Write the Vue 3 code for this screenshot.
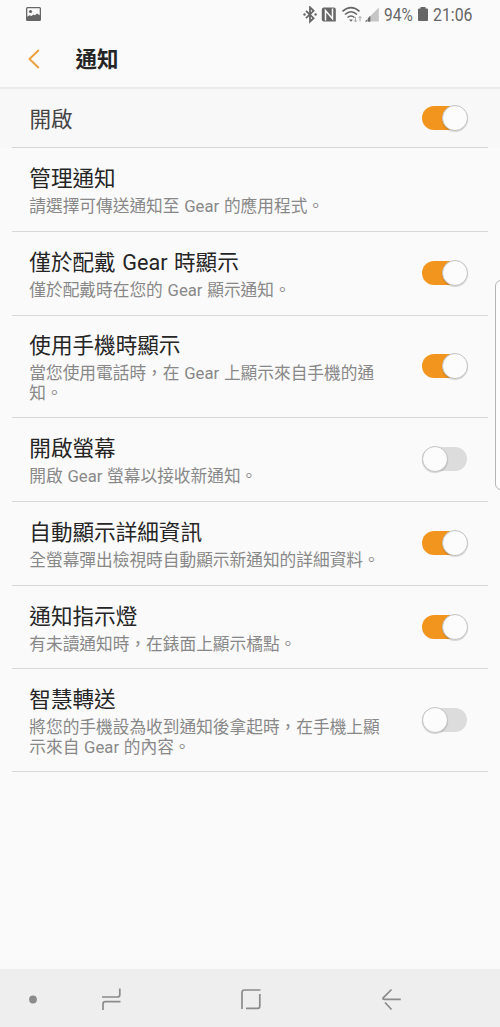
<script setup>
import { ref } from 'vue'

const rows = ref([
  { title: '管理通知', lines: ['請選擇可傳送通知至 Gear 的應用程式。'], on: null, h: 84 },
  { title: '僅於配戴 Gear 時顯示', lines: ['僅於配戴時在您的 Gear 顯示通知。'], on: true, h: 84 },
  { title: '使用手機時顯示', lines: ['當您使用電話時，在 Gear 上顯示來自手機的通', '知。'], on: true, h: 102 },
  { title: '開啟螢幕', lines: ['開啟 Gear 螢幕以接收新通知。'], on: false, h: 84 },
  { title: '自動顯示詳細資訊', lines: ['全螢幕彈出檢視時自動顯示新通知的詳細資料。'], on: true, h: 84 },
  { title: '通知指示燈', lines: ['有未讀通知時，在錶面上顯示橘點。'], on: true, h: 83, low: true },
  { title: '智慧轉送', lines: ['將您的手機設為收到通知後拿起時，在手機上顯', '示來自 Gear 的內容。'], on: false, h: 103, low: true }
])
const master = ref(true)
</script>

<template>
  <div class="screen">
    <header class="status">
      <svg class="picture" width="15" height="15" viewBox="0 0 15 15">
        <path fill="#666" fill-rule="evenodd" d="M1.500 0h12A1.500 1.500 0 0 1 15 1.500v11a1.500 1.500 0 0 1-1.500 1.500h-12A1.500 1.500 0 0 1 0 12.500v-11A1.500 1.500 0 0 1 1.500 0ZM1.300 1.300v8.400L3.500 8.200l2 .8L7.500 7.500l1.500.7L11 6.500l2.700 1.700V1.300Z" />
        <circle cx="4.500" cy="4.500" r="1.600" fill="#666" />
      </svg>
      <div class="indicators">
        <svg width="76" height="18" viewBox="0 0 76 18">
          <g fill="none" stroke="#666" stroke-width="1.800">
            <path d="M3 4.800l7.600 7.400L7 15.700V1.300l3.600 3.500L3 12.200" />
          </g>
          <circle cx="1.500" cy="8.500" r="1.200" fill="#666" />
          <circle cx="12.600" cy="8.500" r="1.200" fill="#666" />
          <path fill="#666" d="M20.500 1.500h10.300a2 2 0 0 1 2 2v12H20.500a2 2 0 0 1-1.700-2v-10a2 2 0 0 1 1.700-2Z" />
          <path d="M22.500 14.500V4.500l7 8.300V2.500" fill="none" stroke="#fafafa" stroke-width="1.500" />
          <g fill="none" stroke="#666" stroke-width="1.600">
            <path d="M39.500 5.300Q48 -2 56.500 5.300M42 8.500Q48 3 54 8.500M44.500 11.500Q48 8.500 51.500 11.500" />
          </g>
          <path d="M46 13.500h4l-2 2.300Z" fill="#666" />
          <path d="M52.500 11v5m-1.500-1.700 1.500 1.700 1.500-1.700M57 15.500v-5m-1.500 1.700L57 10.500l1.500 1.700" fill="none" stroke="#aaa" stroke-width="1" />
          <path d="M75.800 1.500v14H62Z" fill="#c6c6c6" />
          <path d="M67.200 10.100v5.400h-2v-3.300ZM64.300 13.200v2.300H62Z" fill="#666" />
          <path d="M67.200 10.100v5.400h-2v-3.300Z" fill="#666" />
        </svg>
        <span class="percent">94%</span>
        <svg class="battery" width="10" height="14" viewBox="0 0 10 14">
          <path d="M2.500 0h5v1.500H9a1 1 0 0 1 1 1V13a1 1 0 0 1-1 1H1a1 1 0 0 1-1-1V2.500a1 1 0 0 1 1-1h1.500Z" fill="#666" />
        </svg>
        <span class="clock">21:06</span>
      </div>
    </header>

    <div class="appbar">
      <svg width="12" height="20" viewBox="0 0 12 20">
        <path d="M10.800 1 1.500 10l9.300 9" fill="none" stroke="#eda03b" stroke-width="1.900" />
      </svg>
      <h1>通知</h1>
    </div>

    <div class="master">
      <span>開啟</span>
      <button class="switch" :class="{ on: master }" @click="master = !master"><i></i></button>
    </div>

    <main>
      <section v-for="row in rows" :key="row.title" class="row" :style="{ height: row.h + 'px' }">
        <div class="copy" :class="{ low: row.low }">
          <h2>{{ row.title }}</h2>
          <p v-for="line in row.lines" :key="line">{{ line }}</p>
        </div>
        <button v-if="row.on !== null" class="switch" :class="{ on: row.on }" @click="row.on = !row.on"><i></i></button>
      </section>
    </main>

    <nav>
      <svg width="500" height="58" viewBox="0 0 500 58">
        <circle cx="33" cy="30.500" r="3.900" fill="#8b8b8b" />
        <g fill="none" stroke="#8b8b8b" stroke-width="1.700">
          <path d="M102 28h15.500q2.300 0 2.300-2.300V19.500M120.500 32.700h-15.200q-2.300 0-2.300 2.300V41" />
          <path d="M242 40V23.500q0-2.500 2.500-2.500h16M259.800 25v12.300q0 2-2 2H246" />
          <path d="M391.500 20.500l-8.300 8.300q-.8 1.500 1 1.500h16.600M385 33.500l6.500 7" />
        </g>
      </svg>
    </nav>
    <div class="edge"></div>
  </div>
</template>

<style>
body { margin: 0; background: #fafafa; }
</style>

<style scoped>
.screen {
  position: relative;
  width: 500px;
  height: 1027px;
  overflow: hidden;
  display: flex;
  flex-direction: column;
  background: #fafafa;
  font-family: Roboto, "Noto Sans CJK TC", sans-serif;
}
.status {
  height: 30px;
  display: flex;
  justify-content: space-between;
  box-sizing: border-box;
  padding: 0 27px 0 26px;
  color: #666;
}
.picture { margin-top: 7px; }
.indicators { display: flex; align-items: center; height: 30px; }
.indicators span { font-size: 18px; line-height: 30px; white-space: nowrap; transform-origin: left center; }
.percent { width: 29px; margin-left: 5px; transform: scaleX(.86); }
.battery { margin: 0 5px 2px 5px; }
.clock { width: 40px; transform: scaleX(.88); }
.appbar {
  height: 57px;
  display: flex;
  align-items: center;
  box-sizing: border-box;
  padding: 0 0 0 28px;
}
h1 {
  margin: 2px 0 0 35.500px;
  font-size: 21.500px;
  line-height: 30px;
  font-weight: 700;
  color: #252525;
}
.master {
  height: 61px;
  display: flex;
  align-items: center;
  justify-content: space-between;
  box-sizing: border-box;
  border-top: 2px solid #ebebeb;
  padding: 0 32px 2px 29.500px;
  background: linear-gradient(#d5d5d5, #d5d5d5) 12px 100% / 476px 1px no-repeat, #f8f8f8;
  font-size: 21.600px;
  color: #454545;
}
.row {
  display: flex;
  align-items: center;
  justify-content: space-between;
  box-sizing: border-box;
  margin: 0 12px;
  padding: 0 20px 1px 17.300px;
  border-bottom: 1px solid #d8d8d8;
}
h2 {
  margin: 0 0 3px;
  font-size: 21.600px;
  line-height: 30px;
  font-weight: 400;
  color: #252525;
  white-space: nowrap;
  word-spacing: 1.200px;
}
p {
  margin: 0;
  font-size: 16.700px;
  line-height: 20px;
  color: #888;
  white-space: nowrap;
  word-spacing: .6px;
}
.copy { padding-top: 2px; }
.copy.low { padding-top: 4px; }
.switch {
  width: 46px;
  height: 26px;
  flex: none;
  display: flex;
  align-items: center;
  padding: 0;
  border: 0;
  background: none;
  position: relative;
}
.switch::before {
  content: "";
  position: absolute;
  inset: 1px 1px 1px 0;
  border-radius: 12px;
  background: #dcdcdc;
}
.switch.on::before { background: #f2951f; }
.switch.on { justify-content: flex-end; }
.switch i {
  position: relative;
  box-sizing: border-box;
  width: 26px;
  height: 26px;
  border: 1px solid #c4c4c4;
  border-radius: 50%;
  background: #fcfcfc;
  box-shadow: 0 1px 1px rgba(0, 0, 0, .15);
}
nav { margin-top: auto; height: 58px; background: #eee; }
nav svg { display: block; }
.edge {
  position: absolute;
  left: 495px;
  top: 280px;
  width: 20px;
  height: 210px;
  box-sizing: border-box;
  border: 1px solid #b5b5b5;
  border-radius: 6px;
  background: #fdfdfd;
}
</style>
